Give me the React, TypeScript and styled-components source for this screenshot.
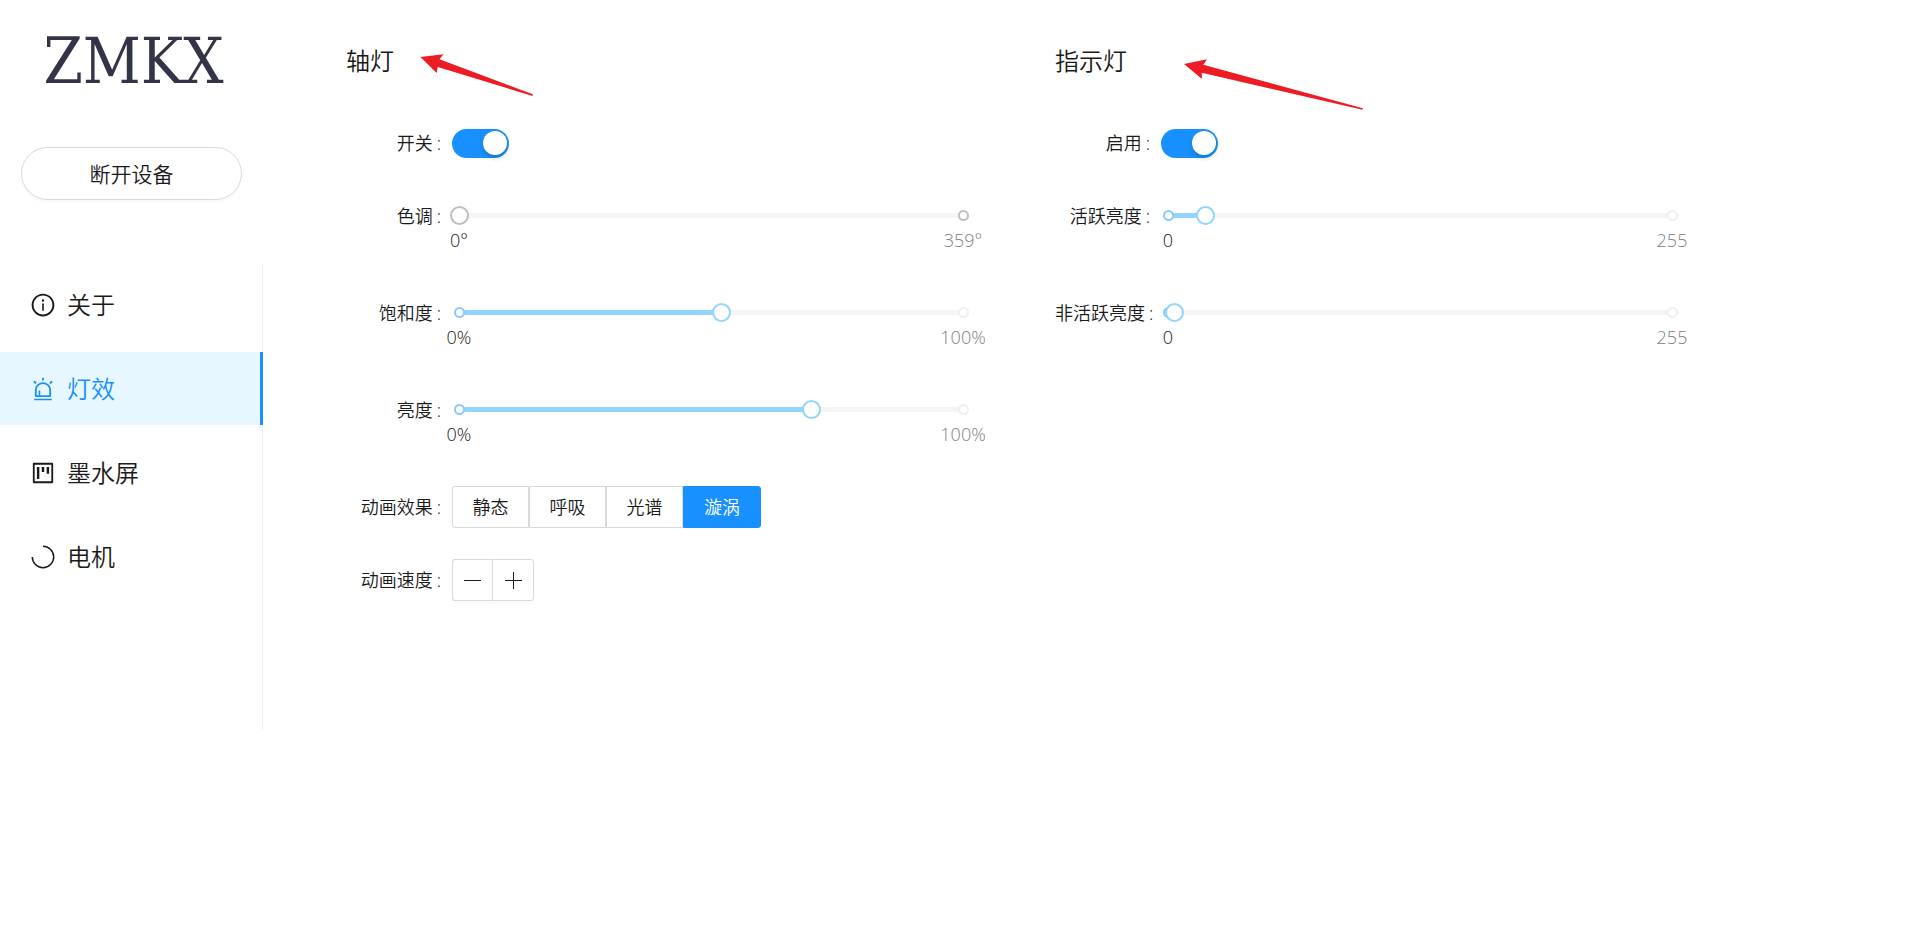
import React, { useState } from "react";
import styled, { createGlobalStyle } from "styled-components";
import {
  AiOutlineAlert,
  AiOutlineInfoCircle,
  AiOutlineProject,
} from "react-icons/ai";

const GlobalStyle = createGlobalStyle`
  * { box-sizing: border-box; }
  body {
    margin: 0;
    background: #fff;
    color: #1a1a1a;
    font-family: "Open Sans", "Noto Sans CJK SC", sans-serif;
    font-size: 18px;
    font-weight: 350;
    line-height: 28px;
  }
  button, input { font: inherit; color: inherit; }
`;

const Page = styled.div`
  display: flex;
  align-items: flex-start;
`;

const Sidebar = styled.aside`
  flex: none;
  display: flex;
  flex-direction: column;
  width: 263px;
`;

const Logo = styled.div`
  padding-top: 25px;
  padding-left: 4px;
  font-family: "DejaVu Serif Condensed", "DejaVu Serif", serif;
  font-size: 63px;
  font-weight: 400;
  line-height: 74px;
  text-align: center;
  color: #343448;
`;

const DisconnectButton = styled.button`
  height: 53px;
  margin: 48px 21px 63px;
  padding: 0;
  border: 1px solid #d9d9d9;
  border-radius: 27px;
  background: #fff;
  box-shadow: 0 3px 0 rgba(0, 0, 0, 0.016);
  font-size: 21px;
  cursor: pointer;
`;

const Menu = styled.nav`
  display: flex;
  flex-direction: column;
  gap: 11px;
  min-height: 467px;
  padding-top: 5px;
  border-right: 1px solid #f0f0f0;
`;

const MenuItem = styled.a<{ $active?: boolean }>`
  display: flex;
  align-items: center;
  gap: 11px;
  height: 73px;
  margin-right: -1px;
  padding-left: 30px;
  border-right: 3px solid ${(p) => (p.$active ? "#1890ff" : "transparent")};
  background: ${(p) => (p.$active ? "#e6f7ff" : "transparent")};
  color: ${(p) => (p.$active ? "#1890ff" : "inherit")};
  font-size: 24px;
  line-height: 36px;
  text-decoration: none;

  svg { flex: none; width: 26px; height: 26px; }
`;

const Content = styled.main`
  flex: 1;
  min-width: 0;
  display: grid;
  grid-template-columns: 1fr 1fr;
  gap: 84px;
  padding: 43px 240px 43px 83px;
`;

const Panel = styled.section`
  min-width: 0;
`;

const PanelHeader = styled.header`
  position: relative;
  margin-bottom: 43px;
`;

const PanelTitle = styled.h2`
  margin: 0;
  font-size: 24px;
  font-weight: inherit;
  line-height: 36px;
`;

const Arrow = styled.svg<{ $left: number; $top: number }>`
  position: absolute;
  left: ${(p) => p.$left}px;
  top: ${(p) => p.$top}px;
  fill: #ed1c24;
`;

const Form = styled.form`
  display: flex;
  flex-direction: column;
  gap: 31px;
`;

const Row = styled.div`
  display: flex;
`;

const labelStyle = `
  flex: none;
  width: 106px;
  line-height: 42px;
  text-align: right;
  white-space: nowrap;
  &::after { content: ":"; margin: 0 11px 0 4px; }
`;

const Label = styled.label`
  ${labelStyle}
`;

const GroupLabel = styled.span`
  ${labelStyle}
`;

const Control = styled.div`
  flex: 1;
  min-width: 0;
  min-height: 42px;
  display: flex;
  align-items: center;
`;

const SwitchInput = styled.input`
  appearance: none;
  display: flex;
  align-items: center;
  justify-content: flex-start;
  width: 57px;
  height: 29px;
  margin: 0;
  padding: 0 2px 0 3px;
  border-radius: 15px;
  background: #bfbfbf;
  cursor: pointer;

  &::before {
    content: "";
    width: 24px;
    height: 24px;
    border-radius: 50%;
    background: #fff;
    box-shadow: 0 3px 5px rgba(0, 35, 11, 0.2);
  }
  &:checked { justify-content: flex-end; background: #1890ff; }
`;

const SliderBox = styled.div`
  flex: 1;
  min-width: 0;
  height: 66px;
  padding: 18px 8px 0 7px;
`;

const Rail = styled.div`
  position: relative;
  display: flex;
  align-items: center;
  justify-content: space-between;
  height: 5px;
  border-radius: 3px;
  background: #f5f5f5;
`;

const Fill = styled.div`
  position: absolute;
  left: 0;
  top: 0;
  height: 5px;
  border-radius: 3px;
  background: #91d5ff;
`;

const Centered = styled.span`
  position: relative;
  display: flex;
  justify-content: center;
  width: 0;
  white-space: nowrap;
`;

const Dot = styled.span<{ $color: string }>`
  flex: none;
  width: 11px;
  height: 11px;
  border: 2px solid ${(p) => p.$color};
  border-radius: 50%;
  background: #fff;
`;

const Range = styled.input<{ $muted?: boolean }>`
  appearance: none;
  position: absolute;
  left: -9px;
  top: -7px;
  width: calc(100% + 18px);
  height: 19px;
  margin: 0;
  background: transparent;
  cursor: pointer;

  &::-webkit-slider-thumb {
    appearance: none;
    width: 19px;
    height: 19px;
    border: 2px solid ${(p) => (p.$muted ? "#bfbfbf" : "#91d5ff")};
    border-radius: 50%;
    background: #fff;
  }
`;

const Marks = styled.div`
  display: flex;
  justify-content: space-between;
  margin-top: 8px;
`;

const Mark = styled.span<{ $active?: boolean }>`
  color: ${(p) => (p.$active ? "#1a1a1a" : "#808080")};
`;

const RadioGroup = styled.div`
  display: flex;
`;

const RadioButton = styled.label`
  display: flex;
  align-items: center;
  justify-content: center;
  width: 77px;
  height: 42px;
  border: 1px solid #d9d9d9;
  cursor: pointer;

  &:first-child { border-radius: 3px 0 0 3px; }
  &:last-child { width: 78px; border-radius: 0 3px 3px 0; }
  &:has(:checked) { border-color: #1890ff; background: #1890ff; color: #fff; }

  input { appearance: none; width: 0; height: 0; margin: 0; }
`;

const StepButton = styled.button`
  display: flex;
  align-items: center;
  justify-content: center;
  width: 42px;
  height: 42px;
  padding: 0;
  border: 1px solid #d9d9d9;
  background: #fff;
  box-shadow: 0 3px 0 rgba(0, 0, 0, 0.016);
  cursor: pointer;

  &:first-child { width: 40px; border-right: 0; border-radius: 3px 0 0 3px; }
  &:last-child { border-radius: 0 3px 3px 0; }
`;

function MotorIcon() {
  return (
    <svg viewBox="0 0 26 26" fill="none" stroke="currentColor" strokeWidth="1.5">
      <path d="M13 2.3A10.7 10.7 0 1 1 2.3 13" />
    </svg>
  );
}

interface SliderProps {
  id: string;
  label: string;
  max: number;
  initial: number;
  unit?: string;
  muted?: boolean;
}

function Slider({ id, label, max, initial, unit = "", muted }: SliderProps) {
  const [value, setValue] = useState(initial);
  const percent = (value / max) * 100;
  return (
    <Row>
      <Label htmlFor={id}>{label}</Label>
      <SliderBox>
        <Rail>
          <Fill style={{ width: `${percent}%` }} />
          <Centered><Dot $color={muted ? "#bfbfbf" : "#8cc8ff"} /></Centered>
          <Centered><Dot $color={muted ? "#bfbfbf" : "#f0f0f0"} /></Centered>
          <Range
            id={id}
            type="range"
            min={0}
            max={max}
            value={value}
            $muted={muted}
            onChange={(e) => setValue(Number(e.target.value))}
          />
        </Rail>
        <Marks>
          <Centered><Mark $active>{`0${unit}`}</Mark></Centered>
          <Centered><Mark>{`${max}${unit}`}</Mark></Centered>
        </Marks>
      </SliderBox>
    </Row>
  );
}

function Switch({ id, label }: { id: string; label: string }) {
  return (
    <Row>
      <Label htmlFor={id}>{label}</Label>
      <Control>
        <SwitchInput id={id} type="checkbox" role="switch" defaultChecked />
      </Control>
    </Row>
  );
}

const menu = [
  { text: "关于", icon: <AiOutlineInfoCircle /> },
  { text: "灯效", icon: <AiOutlineAlert />, active: true },
  { text: "墨水屏", icon: <AiOutlineProject /> },
  { text: "电机", icon: <MotorIcon /> },
];

const effects = ["静态", "呼吸", "光谱", "漩涡"];

export default function App() {
  return (
    <>
      <GlobalStyle />
      <Page>
        <Sidebar>
          <Logo>ZMKX</Logo>
          <DisconnectButton type="button">断开设备</DisconnectButton>
          <Menu>
            {menu.map((item) => (
              <MenuItem key={item.text} href="#" $active={item.active}>
                {item.icon}
                <span>{item.text}</span>
              </MenuItem>
            ))}
          </Menu>
        </Sidebar>
        <Content>
          <Panel>
            <PanelHeader>
              <PanelTitle>轴灯</PanelTitle>
              <Arrow $left={74} $top={10} width="114" height="44" viewBox="0 0 114 44">
                <path d="M0.5 4 23.5 1.2 19.5 6.3 112.8 41.3 112.5 43 17.7 14 16.7 20Z" />
              </Arrow>
            </PanelHeader>
            <Form>
              <Switch id="key-power" label="开关" />
              <Slider id="hue" label="色调" max={359} initial={0} unit="°" muted />
              <Slider id="saturation" label="饱和度" max={100} initial={52} unit="%" />
              <Slider id="brightness" label="亮度" max={100} initial={70} unit="%" />
              <Row>
                <GroupLabel id="effect-label">动画效果</GroupLabel>
                <Control>
                  <RadioGroup role="radiogroup" aria-labelledby="effect-label">
                    {effects.map((name) => (
                      <RadioButton key={name}>
                        <input type="radio" name="effect" defaultChecked={name === "漩涡"} />
                        {name}
                      </RadioButton>
                    ))}
                  </RadioGroup>
                </Control>
              </Row>
              <Row>
                <GroupLabel id="speed-label">动画速度</GroupLabel>
                <Control role="group" aria-labelledby="speed-label">
                  <StepButton type="button" aria-label="减速">
                    <svg width="17" height="17" viewBox="0 0 17 17" fill="currentColor">
                      <path d="M0 8h17v1H0z" />
                    </svg>
                  </StepButton>
                  <StepButton type="button" aria-label="加速">
                    <svg width="17" height="17" viewBox="0 0 17 17" fill="currentColor">
                      <path d="M0 8h17v1H0zM8 0h1v17H8z" />
                    </svg>
                  </StepButton>
                </Control>
              </Row>
            </Form>
          </Panel>
          <Panel>
            <PanelHeader>
              <PanelTitle>指示灯</PanelTitle>
              <Arrow $left={129} $top={15} width="180" height="52" viewBox="0 0 180 52">
                <path d="M0 6 23 1.3 19.3 6.7 178.8 50.3 178.5 51.8 17.7 14.7 18 21Z" />
              </Arrow>
            </PanelHeader>
            <Form>
              <Switch id="indicator-power" label="启用" />
              <Slider id="active-level" label="活跃亮度" max={255} initial={19} />
              <Slider id="idle-level" label="非活跃亮度" max={255} initial={3} />
            </Form>
          </Panel>
        </Content>
      </Page>
    </>
  );
}
